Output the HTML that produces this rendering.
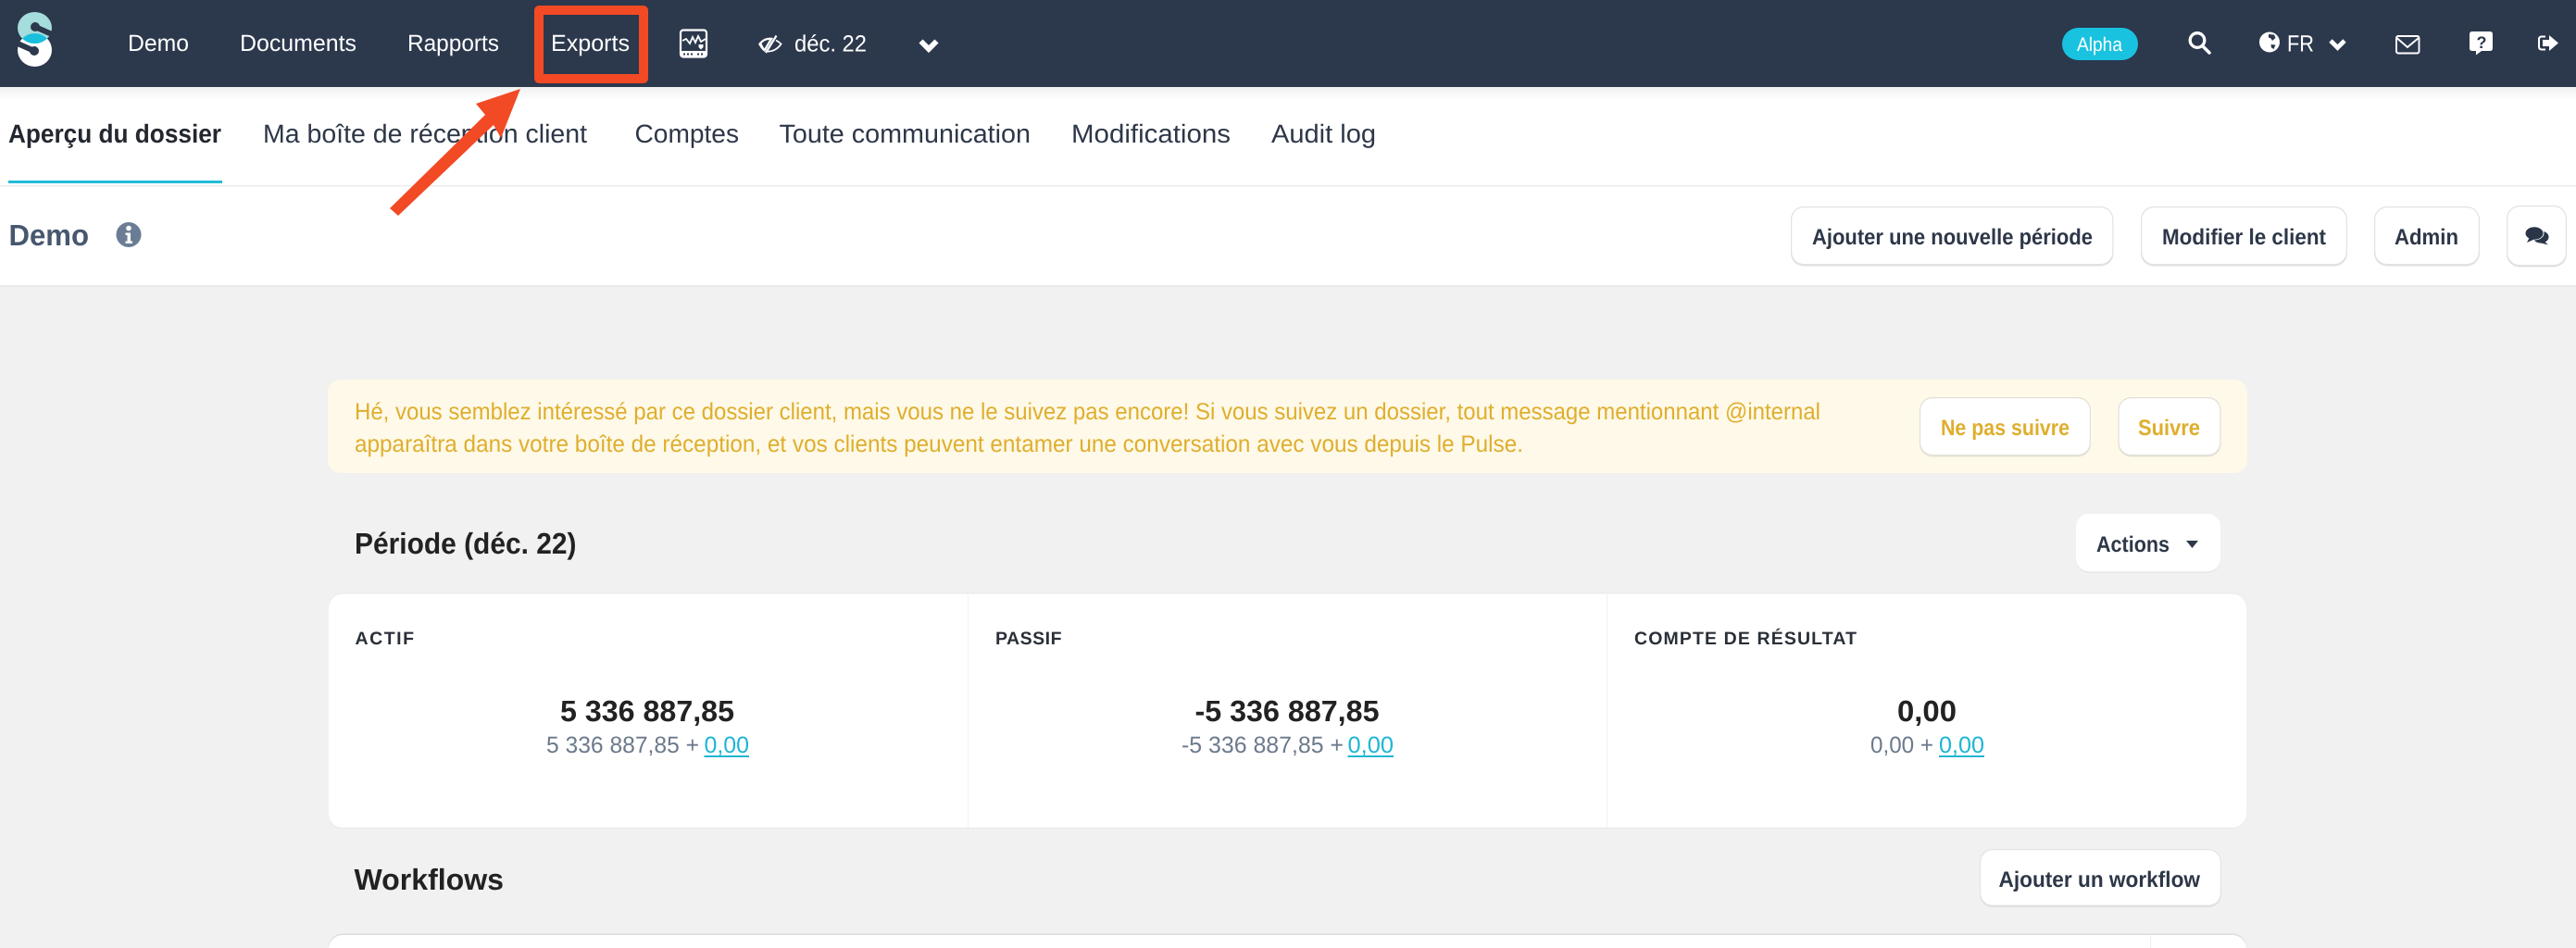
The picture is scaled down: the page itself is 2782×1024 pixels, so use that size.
<!DOCTYPE html>
<html lang="fr">
<head>
<meta charset="utf-8">
<title>Aperçu du dossier</title>
<style>
html,body{margin:0;padding:0;background:#f1f1f1;width:2782px;height:1024px;overflow:hidden}
svg{display:block;position:absolute;left:0;top:0}
text{font-family:"Liberation Sans",sans-serif;text-rendering:geometricPrecision}
.nav{font-size:25px;fill:#fff}
.tab{font-size:28px;fill:#2d3748}
.btn{font-size:24px;font-weight:bold;fill:#2d3748}
.yb{font-size:24px;font-weight:bold;fill:#dfae2e}
.ban{font-size:25.5px;fill:#dfae2e}
.h2{font-size:32px;font-weight:bold;fill:#222}
.lab{font-size:19.5px;font-weight:bold;fill:#2a2f38}
.num{font-size:32px;font-weight:bold;fill:#222}
.sub{font-size:25px;fill:#6c7a8c}
.lnk{font-size:25px;fill:#1eb6d3}
</style>
</head>
<body>
<svg width="2782" height="1024" viewBox="0 0 2782 1024" xmlns="http://www.w3.org/2000/svg">
<defs>
<linearGradient id="sh" x1="0" y1="0" x2="0" y2="1"><stop offset="0" stop-color="#f0f0f0"/><stop offset="1" stop-color="#ffffff"/></linearGradient>
<clipPath id="ct"><ellipse cx="37.5" cy="30" rx="18.5" ry="17"/></clipPath>
</defs>

<rect x="0" y="0" width="2782" height="1024" fill="#f1f1f1"/>
<!-- white header area -->
<rect x="0" y="94" width="2782" height="214" fill="#fff"/>
<rect x="0" y="94" width="2782" height="14" fill="url(#sh)"/>
<rect x="0" y="200" width="2782" height="1.5" fill="#ececec"/>
<rect x="0" y="308" width="2782" height="1.5" fill="#e8e8e8"/>
<!-- nav -->
<rect x="0" y="0" width="2782" height="94" fill="#2c384c"/>

<!-- logo -->
<ellipse cx="37.5" cy="54" rx="18.5" ry="18" fill="#fff"/>
<ellipse cx="37.5" cy="30" rx="18.5" ry="17" fill="#a5dcdc"/>
<ellipse cx="37.5" cy="54" rx="18.5" ry="18" fill="#19bfdc" clip-path="url(#ct)"/>
<path d="M38 29L56 37" stroke="#2c384c" stroke-width="6" stroke-linecap="round" fill="none"/>
<circle cx="38" cy="29" r="5" fill="#2c384c"/>
<path d="M37 55L19 47" stroke="#2c384c" stroke-width="6" stroke-linecap="round" fill="none"/>
<circle cx="37" cy="55" r="5" fill="#2c384c"/>

<text class="nav" x="138" y="55" textLength="66" lengthAdjust="spacingAndGlyphs">Demo</text>
<text class="nav" x="259" y="55" textLength="126" lengthAdjust="spacingAndGlyphs">Documents</text>
<text class="nav" x="440" y="55" textLength="99" lengthAdjust="spacingAndGlyphs">Rapports</text>
<text class="nav" x="595" y="55" textLength="85" lengthAdjust="spacingAndGlyphs">Exports</text>

<!-- monitor icon -->
<rect x="735" y="32.5" width="28" height="29" rx="3" fill="none" stroke="#fff" stroke-width="2.2"/>
<rect x="735" y="55" width="28" height="7" rx="2" fill="#fff"/>
<path d="M737 44L741 42L745 47L748 40L751 46L754 39L757 45L762 42" fill="none" stroke="#fff" stroke-width="1.8"/>
<path d="M754.500 48h5v3l-2.500 2.500l-2.500-2.500z" fill="#fff"/>
<rect x="738" y="57.500" width="2" height="2" fill="#2c384c"/><rect x="742" y="57.500" width="2" height="2" fill="#2c384c"/><rect x="746" y="57.500" width="2" height="2" fill="#2c384c"/><rect x="753" y="57.500" width="2" height="2" fill="#2c384c"/><rect x="757" y="57.500" width="2" height="2" fill="#2c384c"/>

<!-- eye slash icon -->
<path d="M819 47.500C824 41 830 40 835 41L826 56C823 54 821 51 819 47.500Z" fill="#fff"/>
<path d="M822.500 47C824.500 44.500 827.500 43 831 43L825.500 52.500C824.500 51 823.500 49 822.500 47Z" fill="#2c384c"/>
<path d="M838 43.500C840 44.500 842 46 843.500 47.500C840 53 834 56 828.500 55.500" fill="none" stroke="#fff" stroke-width="1.800"/>
<path d="M838.500 38.500L827 57" stroke="#fff" stroke-width="2.200" fill="none"/>

<text class="nav" x="858" y="55.500" textLength="78" lengthAdjust="spacingAndGlyphs">déc. 22</text>
<path d="M994.500 44.500L1003 53L1011.500 44.500" fill="none" stroke="#fff" stroke-width="5.800"/>

<!-- right nav -->
<rect x="2227" y="30" width="82" height="35" rx="17.500" fill="#19c3e0"/>
<text x="2243" y="55" font-size="21" fill="#fff" textLength="49" lengthAdjust="spacingAndGlyphs">Alpha</text>
<circle cx="2373" cy="43.500" r="7.800" fill="none" stroke="#fff" stroke-width="3.300"/>
<path d="M2379 50L2386 57" stroke="#fff" stroke-width="3.500" stroke-linecap="round"/>
<circle cx="2451" cy="45.500" r="11" fill="#fff"/>
<path d="M2450 37L2456 37.500L2457.500 41L2454 44L2452.500 41.500L2450 40.500ZM2452.500 48L2457.500 48.500L2455.500 53L2453 51.500Z" fill="#2c384c"/>
<text x="2470" y="55.500" font-size="25" fill="#fff" textLength="29" lengthAdjust="spacingAndGlyphs">FR</text>
<path d="M2517 44L2524.500 51.500L2532 44" fill="none" stroke="#fff" stroke-width="4.800"/>
<rect x="2588" y="39" width="24.500" height="18.500" rx="2" fill="none" stroke="#fff" stroke-width="1.900"/>
<path d="M2588.500 41L2600 51L2612 41" fill="none" stroke="#fff" stroke-width="1.900"/>
<path d="M2670 34H2689Q2692 34 2692 37V52Q2692 55 2689 55H2680L2674 59.500V55H2670Q2667 55 2667 52V37Q2667 34 2670 34Z" fill="#fff"/>
<text x="2674.500" y="52" font-size="18" font-weight="bold" fill="#2c384c">?</text>
<path d="M2749 39.500H2745Q2742 39.500 2742 42.500V50.500Q2742 53.500 2745 53.500H2749" fill="none" stroke="#fff" stroke-width="2"/>
<path d="M2746 43L2753 43L2753 38L2763 46.500L2753 55L2753 50L2746 50Z" fill="#fff"/>

<!-- tabs -->
<text class="tab" x="9" y="154" font-weight="bold" style="fill:#23272f" textLength="230" lengthAdjust="spacingAndGlyphs">Aperçu du dossier</text>
<rect x="9" y="195" width="231" height="3" fill="#22bcd8"/>
<text class="tab" x="284" y="154" textLength="350" lengthAdjust="spacingAndGlyphs">Ma boîte de réception client</text>
<text class="tab" x="685.500" y="154" textLength="112.500" lengthAdjust="spacingAndGlyphs">Comptes</text>
<text class="tab" x="841.500" y="154" textLength="271.500" lengthAdjust="spacingAndGlyphs">Toute communication</text>
<text class="tab" x="1157" y="154" textLength="172" lengthAdjust="spacingAndGlyphs">Modifications</text>
<text class="tab" x="1373" y="154" textLength="113" lengthAdjust="spacingAndGlyphs">Audit log</text>

<!-- Client header -->
<text x="9.500" y="265" font-size="32" font-weight="bold" fill="#46576f" textLength="86.500" lengthAdjust="spacingAndGlyphs">Demo</text>
<circle cx="139" cy="253.500" r="13.500" fill="#6a7d95"/>
<circle cx="139" cy="246.500" r="2.800" fill="#fff"/>
<path d="M135.500 251.500H141V260.500H143V263H135.500V260.500H137.500V254H135.500Z" fill="#fff"/>

<!-- header buttons -->
<g>
<rect x="1934" y="225" width="348.500" height="62.500" rx="14" fill="#e0e0e0"/>
<rect x="1934.600" y="223.600" width="347.300" height="62" rx="13.500" fill="#fff" stroke="#e2e2e2" stroke-width="1.200"/>
<text class="btn" x="1957" y="264" textLength="303" lengthAdjust="spacingAndGlyphs">Ajouter une nouvelle période</text>
<rect x="2312" y="225" width="223" height="62.500" rx="14" fill="#e0e0e0"/>
<rect x="2312.600" y="223.600" width="221.800" height="62" rx="13.500" fill="#fff" stroke="#e2e2e2" stroke-width="1.200"/>
<text class="btn" x="2335" y="264" textLength="177" lengthAdjust="spacingAndGlyphs">Modifier le client</text>
<rect x="2564" y="225" width="114" height="62.500" rx="14" fill="#e0e0e0"/>
<rect x="2564.600" y="223.600" width="112.800" height="62" rx="13.500" fill="#fff" stroke="#e2e2e2" stroke-width="1.200"/>
<text class="btn" x="2586" y="264" textLength="69" lengthAdjust="spacingAndGlyphs">Admin</text>
<rect x="2707" y="224" width="65" height="64.500" rx="14" fill="#e0e0e0"/>
<rect x="2707.600" y="222.600" width="63.800" height="64" rx="13.500" fill="#fff" stroke="#e2e2e2" stroke-width="1.200"/>
<ellipse cx="2744" cy="256" rx="8.500" ry="6.500" fill="#2a3547"/>
<path d="M2747 260L2752 264.500L2742 262Z" fill="#2a3547"/>
<ellipse cx="2737" cy="252" rx="10.500" ry="7.500" fill="#fff"/>
<ellipse cx="2737" cy="252" rx="9.500" ry="6.800" fill="#2a3547"/>
<path d="M2732 256L2729 262L2738 258Z" fill="#2a3547"/>
</g>

<!-- banner -->
<rect x="354" y="410" width="2073" height="101" rx="14" fill="#fef9e8"/>
<text class="ban" x="383" y="453" textLength="1583" lengthAdjust="spacingAndGlyphs">Hé, vous semblez intéressé par ce dossier client, mais vous ne le suivez pas encore! Si vous suivez un dossier, tout message mentionnant @internal</text>
<text class="ban" x="383" y="488" textLength="1262" lengthAdjust="spacingAndGlyphs">apparaîtra dans votre boîte de réception, et vos clients peuvent entamer une conversation avec vous depuis le Pulse.</text>
<rect x="2073" y="431" width="185" height="62.500" rx="14" fill="#e4e2d8"/>
<rect x="2073.600" y="429.600" width="183.800" height="62" rx="13.500" fill="#fff" stroke="#e2e0d8" stroke-width="1.200"/>
<text class="yb" x="2096" y="470" textLength="139" lengthAdjust="spacingAndGlyphs">Ne pas suivre</text>
<rect x="2287.500" y="431" width="111" height="62.500" rx="14" fill="#e4e2d8"/>
<rect x="2288.100" y="429.600" width="109.800" height="62" rx="13.500" fill="#fff" stroke="#e2e0d8" stroke-width="1.200"/>
<text class="yb" x="2309" y="470" textLength="67" lengthAdjust="spacingAndGlyphs">Suivre</text>

<!-- Période -->
<text class="h2" x="383" y="598" textLength="239.500" lengthAdjust="spacingAndGlyphs">Période (déc. 22)</text>
<rect x="2242" y="557" width="156" height="61.500" rx="14" fill="#dedede"/>
<rect x="2242" y="555" width="156" height="62.500" rx="14" fill="#fff"/>
<text class="btn" x="2264" y="596" textLength="79" lengthAdjust="spacingAndGlyphs">Actions</text>
<path d="M2361 584H2374L2367.500 592Z" fill="#2d3748"/>

<!-- stats card -->
<rect x="355" y="640.500" width="2071" height="254.500" rx="15" fill="#e8e8e8"/>
<rect x="355" y="641.500" width="2071" height="252.500" rx="15" fill="#fff"/>
<rect x="1045" y="642" width="1" height="252" fill="#f2f2f2"/>
<rect x="1735" y="642" width="1" height="252" fill="#f2f2f2"/>

<text class="lab" x="383.500" y="696" textLength="63.500" lengthAdjust="spacing">ACTIF</text>
<text class="lab" x="1075" y="696" textLength="71.500" lengthAdjust="spacing">PASSIF</text>
<text class="lab" x="1765" y="696" textLength="240" lengthAdjust="spacing">COMPTE DE RÉSULTAT</text>

<text class="num" x="605" y="779" textLength="188" lengthAdjust="spacingAndGlyphs">5 336 887,85</text>
<text class="sub" x="590" y="813" textLength="165" lengthAdjust="spacingAndGlyphs">5 336 887,85 +</text>
<text class="lnk" x="760.500" y="813" textLength="48.500" lengthAdjust="spacingAndGlyphs">0,00</text>
<rect x="760.500" y="816" width="48.500" height="2" fill="#1eb6d3"/>

<text class="num" x="1290.500" y="779" textLength="199" lengthAdjust="spacingAndGlyphs">-5 336 887,85</text>
<text class="sub" x="1276" y="813" textLength="175" lengthAdjust="spacingAndGlyphs">-5 336 887,85 +</text>
<text class="lnk" x="1455.500" y="813" textLength="49.500" lengthAdjust="spacingAndGlyphs">0,00</text>
<rect x="1455.500" y="816" width="49.500" height="2" fill="#1eb6d3"/>

<text class="num" x="2049" y="779" textLength="64" lengthAdjust="spacingAndGlyphs">0,00</text>
<text class="sub" x="2020" y="813" textLength="68" lengthAdjust="spacingAndGlyphs">0,00 +</text>
<text class="lnk" x="2094" y="813" textLength="49" lengthAdjust="spacingAndGlyphs">0,00</text>
<rect x="2094" y="816" width="49" height="2" fill="#1eb6d3"/>

<!-- Workflows -->
<text class="h2" x="382.500" y="961" textLength="161.500" lengthAdjust="spacingAndGlyphs">Workflows</text>
<rect x="2138" y="919" width="261" height="61" rx="14" fill="#dedede"/>
<rect x="2138.600" y="917.600" width="259.800" height="60.500" rx="13.500" fill="#fff" stroke="#e4e4e4" stroke-width="1.200"/>
<text class="btn" x="2158.500" y="958" textLength="217.500" lengthAdjust="spacingAndGlyphs">Ajouter un workflow</text>

<rect x="355" y="1008.500" width="2071" height="60" rx="15" fill="#dcdcdc"/>
<rect x="355" y="1010" width="2071" height="60" rx="15" fill="#fff"/>
<rect x="2322" y="1010" width="1" height="14" fill="#f0f0f0"/>

<!-- annotation -->
<path fill-rule="evenodd" d="M583 6H694Q700 6 700 12V84Q700 90 694 90H583Q577 90 577 84V12Q577 6 583 6ZM587 16V80H690V16Z" fill="#f24a25"/>
<path d="M562 96L514 112L524 124L421 225L430 233L533 135L541 149Z" fill="#f24a25"/>
</svg>
</body>
</html>
